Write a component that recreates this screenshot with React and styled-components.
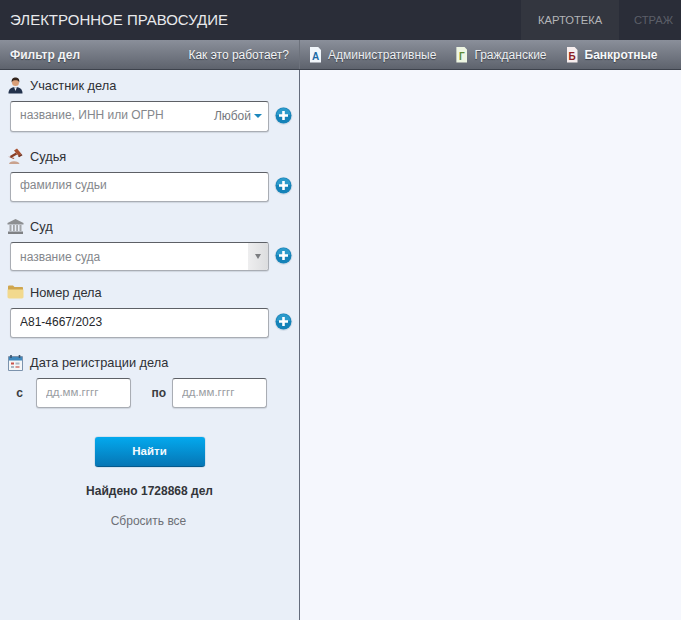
import React from 'react'
import styled, { createGlobalStyle } from 'styled-components'

const Global = createGlobalStyle`
  html, body {
    margin: 0;
    padding: 0;
    height: 100%;
    overflow: hidden;
    font-family: 'Liberation Sans', Arial, sans-serif;
  }
  * { box-sizing: border-box; }
`

const Page = styled.div`
  width: 681px;
  height: 620px;
  display: flex;
  flex-direction: column;
  overflow: hidden;
  background: #f5f7fd;
`

const TopBar = styled.header`
  height: 40px;
  flex: none;
  display: flex;
  justify-content: space-between;
  background: #2a2d38;
`

const Title = styled.div`
  padding-left: 10px;
  line-height: 40px;
  font-size: 15px;
  color: #e8e9ec;
`

const Tabs = styled.nav`
  display: flex;
`

const Tab = styled.a`
  width: ${p => p.$width}px;
  padding-left: ${p => p.$pad}px;
  line-height: 40px;
  font-size: 11.2px;
  white-space: nowrap;
  overflow: hidden;
  color: ${p => (p.$active ? '#b4b5b8' : '#5c5f68')};
  background: ${p => (p.$active ? '#33363f' : 'transparent')};
`

const SubBar = styled.div`
  height: 30px;
  flex: none;
  display: flex;
  background: linear-gradient(#8a8f9a, #5e636d);
  border-bottom: 1px solid #3d424c;
`

const FilterHead = styled.div`
  width: 300px;
  flex: none;
  padding: 0 10px;
  display: flex;
  align-items: center;
  justify-content: space-between;
  border-right: 1px solid #6d727c;
  font-size: 12px;
  color: #f2f3f5;
  text-shadow: 0 1px 1px #3c4049;
`

const FilterTitle = styled.b`
  font-weight: bold;
`

const Kinds = styled.div`
  display: flex;
  align-items: center;
  padding-left: 10px;
`

const Kind = styled.a`
  display: flex;
  align-items: center;
  gap: 7px;
  margin-right: ${p => p.$gap}px;
  font-size: 12px;
  font-weight: ${p => (p.$active ? 'bold' : 'normal')};
  color: ${p => (p.$active ? '#f7f8fa' : '#eceef1')};
  text-shadow: 0 1px 1px #3c4049;
`

const Body = styled.div`
  flex: 1;
  display: flex;
  min-height: 0;
`

const Sidebar = styled.aside`
  width: 300px;
  flex: none;
  padding-top: 6px;
  background: #e9eff8;
  border-right: 1px solid #646c7c;
`

const Main = styled.main`
  flex: 1;
  background: #f5f7fd;
`

const Label = styled.div`
  height: 20px;
  margin-top: ${p => p.$top}px;
  padding: 0 0 ${p => p.$lift}px 7px;
  display: flex;
  align-items: center;
  gap: 6px;
  font-size: 12.8px;
  color: #2e3035;
`

const Row = styled.div`
  margin-top: ${p => p.$top}px;
  padding-left: 10px;
  display: flex;
  align-items: center;
  gap: 5px;
`

const InputBox = styled.div`
  position: relative;
  width: 259px;
  height: ${p => p.$h}px;
  display: flex;
  align-items: stretch;
  overflow: hidden;
  background: #fff;
  border: 1px solid #a9adb4;
  border-top-color: #5d6066;
  border-radius: 3px;
  box-shadow: 0 1px 1px #cfd5de;
`

const TextInput = styled.input`
  flex: 1;
  min-width: 0;
  border: 0;
  outline: none;
  padding: 0 0 ${p => p.$lift}px 9px;
  background: transparent;
  font: 12px 'Liberation Sans', Arial, sans-serif;
  color: #26282c;
  &::placeholder {
    color: #84878c;
    opacity: 1;
  }
`

const Any = styled.span`
  padding: 0 6px 2px 0;
  display: flex;
  align-items: center;
  gap: 3px;
  font-size: 12px;
  color: #75787d;
`

const Caret = styled.i`
  width: 0;
  height: 0;
  border: 4px solid transparent;
  border-top-color: #1c87bd;
  border-bottom: 0;
`

const ComboArrow = styled.span`
  width: 20px;
  display: flex;
  align-items: center;
  justify-content: center;
  background: linear-gradient(90deg, #eeeeef, #dcdddf);
  &::after {
    content: '';
    border: 3.5px solid transparent;
    border-top: 5px solid #7b7d80;
    border-bottom: 0;
  }
`

const DateRow = styled.div`
  margin-top: 5px;
  display: flex;
  align-items: center;
`

const DateLabel = styled.b`
  width: ${p => p.$width}px;
  text-align: right;
  padding-right: ${p => p.$pad}px;
  font-size: 12px;
  color: #3a3c41;
`

const DateInput = styled.input`
  width: 95px;
  height: 30px;
  border: 1px solid #a9adb4;
  border-top-color: #5d6066;
  border-radius: 3px;
  outline: none;
  padding: 0 0 2px 9px;
  background: #fff;
  font: 11.5px 'Liberation Sans', Arial, sans-serif;
  box-shadow: 0 1px 1px #cfd5de;
  &::placeholder {
    color: #9a9da2;
    opacity: 1;
  }
`

const Actions = styled.div`
  margin-top: 29px;
  width: 299px;
  display: flex;
  flex-direction: column;
  align-items: center;
`

const FindButton = styled.button`
  width: 110px;
  height: 30px;
  padding: 0 0 2px;
  border: 0;
  border-bottom: 1px solid #05598c;
  border-radius: 3px;
  background: linear-gradient(#03a9ee, #0676b5);
  font: bold 11.5px 'Liberation Sans', Arial, sans-serif;
  color: #f3fafe;
  box-shadow: 0 0 1px #0a6596;
`

const Found = styled.div`
  margin-top: 17px;
  line-height: 14px;
  font-size: 12px;
  font-weight: bold;
  color: #33353a;
`

const Reset = styled.a`
  margin-top: 16px;
  padding-right: 2px;
  line-height: 14px;
  font-size: 12px;
  color: #6d7076;
`

const PlusSvg = styled.svg`
  flex: none;
  margin-bottom: 3px;
`

const Plus = () => (
  <PlusSvg width="19" height="19" viewBox="0 0 19 19">
    <circle cx="9.5" cy="10" r="9" fill="#d5dde8" />
    <circle cx="9.5" cy="9.5" r="8" fill="#1482b8" />
    <path d="M2.5 9a7 7 0 0 1 14 0z" fill="#2c9acb" />
    <path d="M9.5 5v9M5 9.5h9" stroke="#fff" strokeWidth="2.6" />
  </PlusSvg>
)

const PersonIcon = () => (
  <svg width="17" height="17" viewBox="-.5 0 17 17">
    <path d="M1 16.500c0-4 2-5.600 5-6.200h4c3 .6 5 2.200 5 6.200z" fill="#23324c" />
    <path d="M6.600 10.200 8 14l1.400-3.800z" fill="#e9edf2" />
    <circle cx="8" cy="5.400" r="3.500" fill="#d99f78" />
    <path d="M4.200 5.400C3.800 1.600 6 .6 8 .6s4.200 1 3.800 4.800C11 3.400 9.500 3.200 8 3.200s-3 .2-3.800 2.200z" fill="#33241c" />
  </svg>
)

const GavelIcon = () => (
  <svg width="17" height="17" viewBox="0 0 17 17">
    <path d="M2 16c.5-2 2-2.800 5-2.800s5 .8 5.500 2.800z" fill="#c9a28e" />
    <path d="m1 8.500 6.500 1.500-1 1z" fill="#9c4a2c" />
    <path d="M3.500 9 9.500 5.500" stroke="#8a3f26" strokeWidth="2.400" />
    <path d="m7 2.500 3-2 4.500 5.500-3 2z" fill="#a8502f" />
    <path d="m11 8 3.500-2 1 1.200-3.500 2z" fill="#6e2f1c" />
  </svg>
)

const CourtIcon = () => (
  <svg width="17" height="15" viewBox="0 0 17 15">
    <path d="M8.500 0 16.500 4v1.500H.5V4z" fill="#8d8f92" />
    <path d="M2.500 6h2v6h-2zM6 6h1.800v6H6zM9.200 6H11v6H9.200zM12.500 6h2v6h-2z" fill="#a4a6a9" />
    <path d="M1 12.500h15V15H1z" fill="#7f8184" />
  </svg>
)

const FolderIcon = () => (
  <svg width="17" height="14" viewBox="0 0 17 14">
    <path d="M1 3V1.500C1 1 1.400.6 2 .6h4l1.500 1.400H15c.6 0 1 .4 1 1V5H1z" fill="#cfa64f" />
    <path d="M.5 4.500h16V12c0 .8-.6 1.400-1.400 1.400H2c-.8 0-1.500-.6-1.500-1.400z" fill="#f2d98e" />
  </svg>
)

const CalendarIcon = () => (
  <svg width="17" height="17" viewBox="-1 0 17 17">
    <path d="M.5 2.500h14v14H.5z" fill="#f4f6f8" stroke="#7c93ad" />
    <path d="M1 3h13v3.500H1z" fill="#3f88bd" />
    <path d="M3 1v3M11.500 1v3" stroke="#39536d" strokeWidth="1.600" />
    <path d="M3 8.500h3v2H3z" fill="#c9514a" />
    <path d="M7.500 8.500h4v2h-4zM3 12h3v2H3z" fill="#a9b6c4" />
    <path d="M7.500 12h4v2h-4z" fill="#d9938e" />
  </svg>
)

const DocBase = styled.span`
  width: 11px;
  height: 16px;
  flex: none;
  display: flex;
  align-items: flex-end;
  justify-content: center;
  padding-bottom: 1px;
  background: ${p => p.$bg};
  clip-path: polygon(0 0, 70% 0, 100% 22%, 100% 100%, 0 100%);
  font-size: 10px;
  line-height: 11px;
  font-weight: bold;
  text-shadow: none;
  color: ${p => p.$color};
`

export default function App() {
  return (
    <Page>
      <Global />
      <TopBar>
        <Title>ЭЛЕКТРОННОЕ ПРАВОСУДИЕ</Title>
        <Tabs>
          <Tab $active $width={98} $pad={17}>КАРТОТЕКА</Tab>
          <Tab $width={62} $pad={15}>СТРАЖ</Tab>
        </Tabs>
      </TopBar>
      <SubBar>
        <FilterHead>
          <FilterTitle>Фильтр дел</FilterTitle>
          <span>Как это работает?</span>
        </FilterHead>
        <Kinds>
          <Kind $gap={20}><DocBase $bg="#f1f6fb" $color="#1c6aa6">А</DocBase>Административные</Kind>
          <Kind $gap={20}><DocBase $bg="#eef6e2" $color="#5d8a35">Г</DocBase>Гражданские</Kind>
          <Kind $active $gap={0}><DocBase $bg="#f7eeee" $color="#8e1c22">Б</DocBase>Банкротные</Kind>
        </Kinds>
      </SubBar>
      <Body>
        <Sidebar>
          <Label $top={0} $lift={2}><PersonIcon />Участник дела</Label>
          <Row $top={5}>
            <InputBox $h={31}>
              <TextInput $lift={3} placeholder="название, ИНН или ОГРН" />
              <Any>Любой<Caret /></Any>
            </InputBox>
            <Plus />
          </Row>
          <Label $top={14} $lift={0}><GavelIcon />Судья</Label>
          <Row $top={6}>
            <InputBox $h={30}>
              <TextInput $lift={5} placeholder="фамилия судьи" />
            </InputBox>
            <Plus />
          </Row>
          <Label $top={15} $lift={2}><CourtIcon />Суд</Label>
          <Row $top={5}>
            <InputBox $h={29}>
              <TextInput $lift={0} placeholder="название суда" />
              <ComboArrow />
            </InputBox>
            <Plus />
          </Row>
          <Label $top={12} $lift={2}><FolderIcon />Номер дела</Label>
          <Row $top={5}>
            <InputBox $h={30}>
              <TextInput $lift={2} defaultValue="А81-4667/2023" />
            </InputBox>
            <Plus />
          </Row>
          <Label $top={15} $lift={2}><CalendarIcon />Дата регистрации дела</Label>
          <DateRow>
            <DateLabel $width={36} $pad={13}>с</DateLabel>
            <DateInput placeholder="дд.мм.гггг" />
            <DateLabel $width={41} $pad={6}>по</DateLabel>
            <DateInput placeholder="дд.мм.гггг" />
          </DateRow>
          <Actions>
            <FindButton>Найти</FindButton>
            <Found>Найдено 1728868 дел</Found>
            <Reset>Сбросить все</Reset>
          </Actions>
        </Sidebar>
        <Main />
      </Body>
    </Page>
  )
}
